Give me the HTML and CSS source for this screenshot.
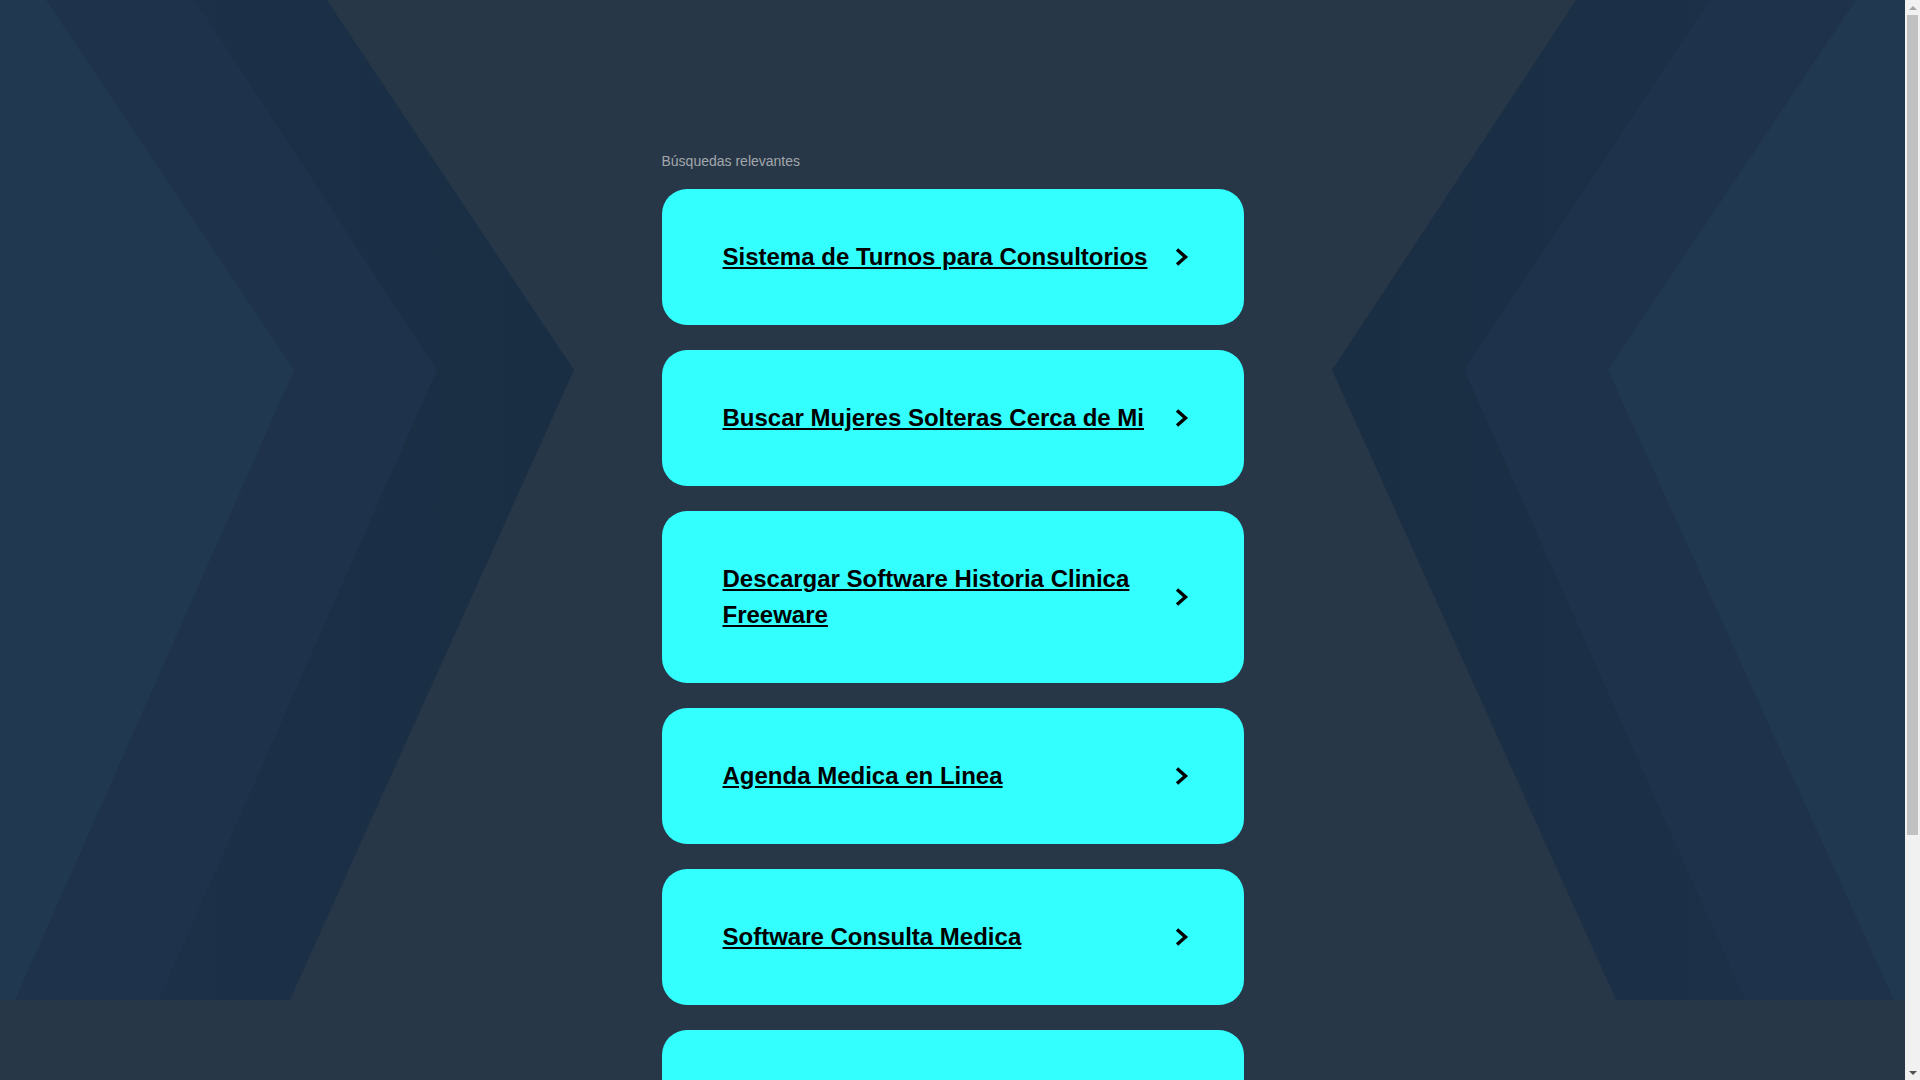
FILE: index.html
```html
<!DOCTYPE html>
<html lang="es">
<head>
<meta charset="utf-8">
<title>Búsquedas relevantes</title>
<link rel="stylesheet" href="styles.css">
</head>
<body>
<div class="page">
  <svg class="bg" viewBox="0 0 1905 1000" preserveAspectRatio="none" aria-hidden="true">
    <defs>
      <linearGradient id="gl" x1="0" y1="0" x2="1" y2="0">
        <stop offset="0" stop-color="#1d3149"/>
        <stop offset="1" stop-color="#192d43"/>
      </linearGradient>
      <linearGradient id="gr" x1="1" y1="0" x2="0" y2="0">
        <stop offset="0" stop-color="#1d3149"/>
        <stop offset="1" stop-color="#192d43"/>
      </linearGradient>
    </defs>
    <polygon fill="url(#gl)" points="0,0 327,0 574,370 290,1000 0,1000"/>
    <polygon class="band-mid" points="0,0 195,0 437,370 159,1000 0,1000"/>
    <polygon class="band-light" points="0,0 46,0 294,370 15,1000 0,1000"/>
    <polygon fill="url(#gr)" points="1905,0 1576,0 1332,370 1616,1000 1905,1000"/>
    <polygon class="band-mid" points="1905,0 1710,0 1464,370 1745,1000 1905,1000"/>
    <polygon class="band-light" points="1905,0 1856,0 1608,370 1894,1000 1905,1000"/>
  </svg>
  <main class="content">
    <p class="label">Búsquedas relevantes</p>
    <ul class="list">
      <li><a class="card" href="#"><span class="card-text">Sistema de Turnos para Consultorios</span><svg class="arrow" viewBox="0 0 15 20"><polyline points="3,2.5 11.5,10 3,17.5"/></svg></a></li>
      <li><a class="card" href="#"><span class="card-text">Buscar Mujeres Solteras Cerca de Mi</span><svg class="arrow" viewBox="0 0 15 20"><polyline points="3,2.5 11.5,10 3,17.5"/></svg></a></li>
      <li><a class="card" href="#"><span class="card-text">Descargar Software Historia Clinica Freeware</span><svg class="arrow" viewBox="0 0 15 20"><polyline points="3,2.5 11.5,10 3,17.5"/></svg></a></li>
      <li><a class="card" href="#"><span class="card-text">Agenda Medica en Linea</span><svg class="arrow" viewBox="0 0 15 20"><polyline points="3,2.5 11.5,10 3,17.5"/></svg></a></li>
      <li><a class="card" href="#"><span class="card-text">Software Consulta Medica</span><svg class="arrow" viewBox="0 0 15 20"><polyline points="3,2.5 11.5,10 3,17.5"/></svg></a></li>
      <li><a class="card" href="#"><span class="card-text">Programa para Consultorio Medico</span><svg class="arrow" viewBox="0 0 15 20"><polyline points="3,2.5 11.5,10 3,17.5"/></svg></a></li>
    </ul>
  </main>
</div>
<div class="scrollbar" aria-hidden="true">
  <div class="sb-btn"><span class="tri tri-up"></span></div>
  <div class="sb-track"><div class="sb-thumb"></div></div>
  <div class="sb-btn"><span class="tri tri-down"></span></div>
</div>
</body>
</html>
```
FILE: styles.css
```css
html, body {
  margin: 0;
  padding: 0;
}

html {
  overflow: hidden;
}

body {
  background: #283747;
  font-family: "Liberation Sans", Arial, sans-serif;
  display: flex;
  align-items: flex-start;
  height: 100vh;
  overflow: hidden;
}

.page {
  flex: 1;
  min-width: 0;
  display: grid;
  grid-template-columns: 1fr;
}

.bg {
  grid-area: 1 / 1;
  align-self: start;
  width: 100%;
  height: 1000px;
  display: block;
}

.band-mid { fill: #1e334b; }
.band-light { fill: #203950; }

.content {
  grid-area: 1 / 1;
  width: 582px;
  justify-self: center;
  padding: 151px 0 140px;
  z-index: 1;
}

.label {
  margin: 0 0 18px;
  font-size: 14px;
  line-height: 20px;
  color: #a2a7ad;
}

.list {
  list-style: none;
  margin: 0;
  padding: 0;
  display: flex;
  flex-direction: column;
  gap: 25px;
}

.card {
  display: flex;
  align-items: center;
  padding: 50px 55px 50px 61px;
  border-radius: 25px;
  background: #33ffff;
  color: #000;
  text-decoration: none;
}

.card-text {
  flex: 1;
  font-size: 24px;
  line-height: 36px;
  font-weight: 700;
  text-decoration: underline;
  text-underline-offset: 2px;
}

.arrow {
  flex: none;
  width: 15px;
  height: 20px;
  margin-left: 20px;
  fill: none;
  stroke: #000;
  stroke-width: 3.4;
}

/* classic browser scrollbar, as seen in the screenshot */
.scrollbar {
  flex: none;
  width: 15px;
  height: 100vh;
  background: #f1f1f1;
  display: flex;
  flex-direction: column;
}

.sb-btn {
  height: 15px;
  flex: none;
  display: flex;
  align-items: center;
  justify-content: center;
}

.tri {
  width: 0;
  height: 0;
  border-left: 4px solid transparent;
  border-right: 4px solid transparent;
}

.tri-up {
  border-bottom: 4px solid #a3a3a3;
}

.tri-down {
  border-top: 4px solid #505050;
}

.sb-track {
  flex: 1;
  padding: 0 2px;
}

.sb-thumb {
  height: 820px;
  background: #c1c1c1;
}
```
